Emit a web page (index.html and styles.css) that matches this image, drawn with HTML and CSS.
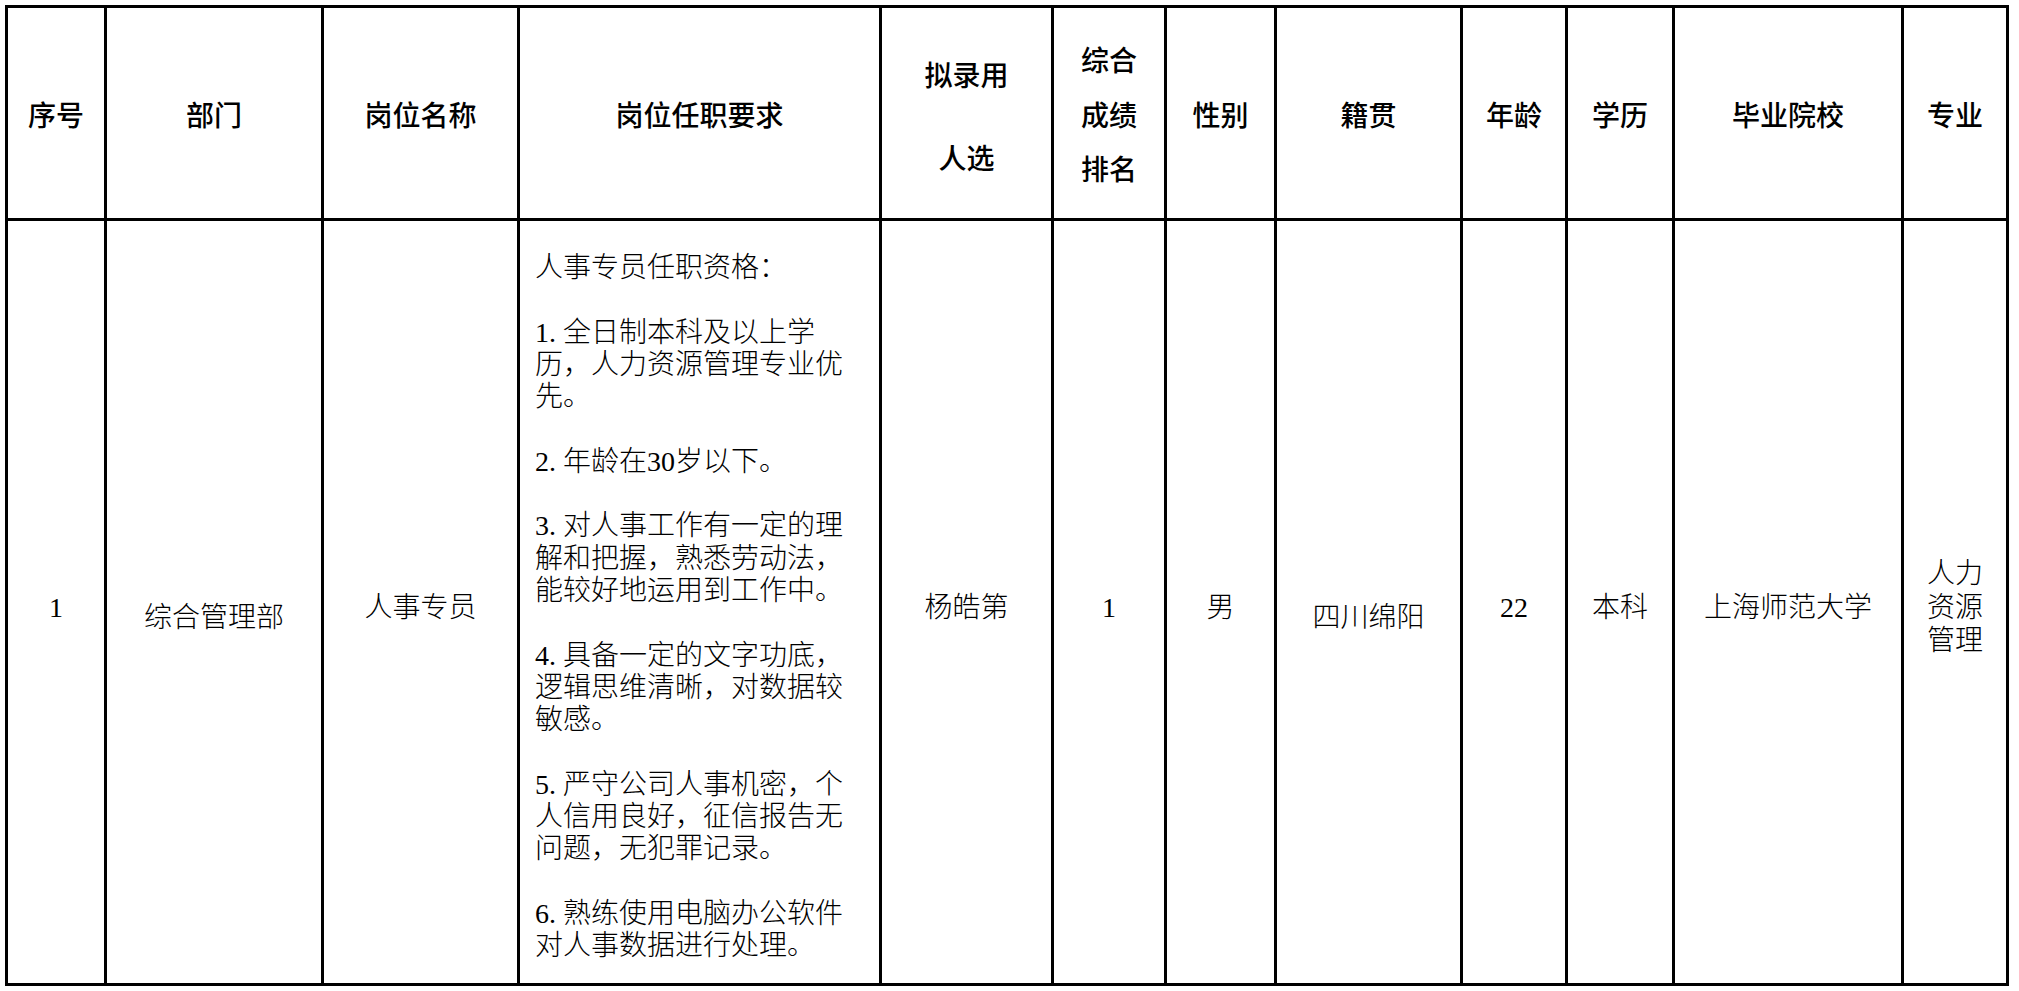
FILE: index.html
```html
<!DOCTYPE html>
<html lang="zh-CN">
<head>
<meta charset="utf-8">
<title>拟录用人选</title>
<link rel="stylesheet" href="styles.css">
</head>
<body>
<table class="sheet">
  <colgroup>
    <col class="w-no">
    <col class="w-dept">
    <col class="w-post">
    <col class="w-req">
    <col class="w-name">
    <col class="w-rank">
    <col class="w-sex">
    <col class="w-home">
    <col class="w-age">
    <col class="w-edu">
    <col class="w-school">
    <col class="w-major">
  </colgroup>
  <thead>
    <tr class="head-row">
      <th>序号</th>
      <th>部门</th>
      <th>岗位名称</th>
      <th>岗位任职要求</th>
      <th class="th-wide">拟录用<br>人选</th>
      <th class="th-stack">综合<br>成绩<br>排名</th>
      <th>性别</th>
      <th>籍贯</th>
      <th>年龄</th>
      <th>学历</th>
      <th>毕业院校</th>
      <th>专业</th>
    </tr>
  </thead>
  <tbody>
    <tr class="body-row">
      <td>1</td>
      <td class="td-low">综合管理部</td>
      <td>人事专员</td>
      <td class="req">
        <p>人事专员任职资格：</p>
        <p>1. 全日制本科及以上学<br>历，人力资源管理专业优<br>先。</p>
        <p>2. 年龄在30岁以下。</p>
        <p>3. 对人事工作有一定的理<br>解和把握，熟悉劳动法，<br>能较好地运用到工作中。</p>
        <p>4. 具备一定的文字功底，<br>逻辑思维清晰，对数据较<br>敏感。</p>
        <p>5. 严守公司人事机密，个<br>人信用良好，征信报告无<br>问题，无犯罪记录。</p>
        <p>6. 熟练使用电脑办公软件<br>对人事数据进行处理。</p>
      </td>
      <td>杨皓第</td>
      <td>1</td>
      <td>男</td>
      <td class="td-low">四川绵阳</td>
      <td>22</td>
      <td>本科</td>
      <td>上海师范大学</td>
      <td class="td-major">人力<br>资源<br>管理</td>
    </tr>
  </tbody>
</table>
</body>
</html>
```

FILE: styles.css
```css
html, body {
  margin: 0;
  padding: 0;
  background: #ffffff;
}

body {
  padding: 5px 0 0 5px;
  font-family: "Liberation Serif", "Noto Sans CJK SC", serif;
  color: #000000;
}

.sheet {
  border-collapse: collapse;
  table-layout: fixed;
  width: 2001px;
}

.w-no { width: 99px; }
.w-dept { width: 217px; }
.w-post { width: 196px; }
.w-req { width: 362px; }
.w-name { width: 172px; }
.w-rank { width: 113px; }
.w-sex { width: 110px; }
.w-home { width: 186px; }
.w-age { width: 105px; }
.w-edu { width: 107px; }
.w-school { width: 229px; }
.w-major { width: 105px; }

.sheet th,
.sheet td {
  border: 3px solid #000000;
  text-align: center;
  vertical-align: middle;
  padding: 0;
  font-size: 28px;
  white-space: nowrap;
}

.head-row {
  height: 213px;
}

.sheet th {
  font-weight: 500;
  line-height: 34px;
  padding-top: 8px;
}

.sheet th.th-wide {
  line-height: 83px;
  padding-top: 10px;
}

.sheet th.th-stack {
  line-height: 54.5px;
  padding-top: 8px;
}

.body-row {
  height: 765px;
}

.sheet td {
  font-weight: 300;
  line-height: 34px;
  padding-top: 11px;
}

.sheet td.td-low {
  padding-top: 31px;
}

.sheet td.td-major {
  line-height: 33.5px;
  padding-top: 11px;
}

.sheet td.req {
  text-align: left;
  vertical-align: top;
  padding: 31px 10px 0 15px;
  line-height: 32.3px;
}

.req p {
  margin: 0 0 32.3px 0;
}

.req p:last-child {
  margin-bottom: 0;
}
```
